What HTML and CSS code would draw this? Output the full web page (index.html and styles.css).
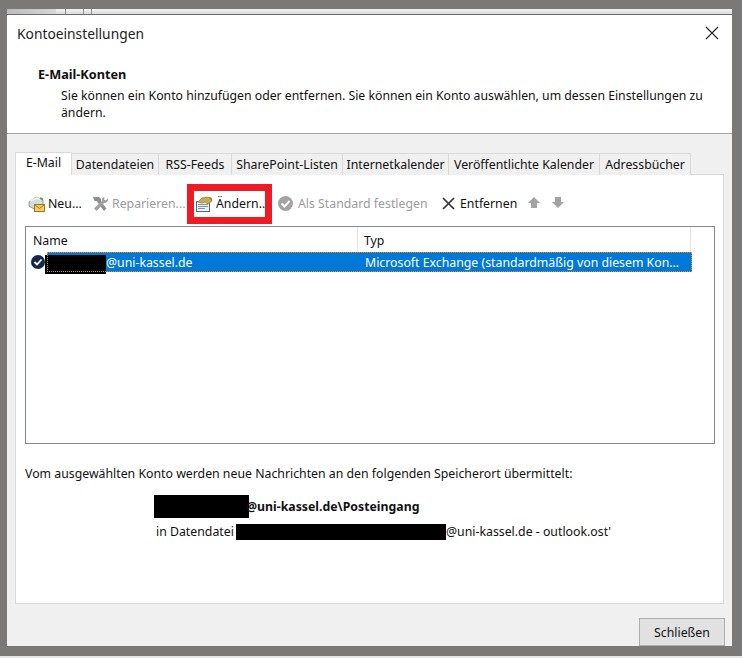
FILE: index.html
```html
<!DOCTYPE html>
<html lang="de">
<head>
    <meta charset="UTF-8">
    <meta name="viewport" content="width=device-width, initial-scale=1.0">
    <title>Kontoeinstellungen</title>
    <link rel="stylesheet" href="styles.css">
</head>
<body>
    <div class="dialog">
        <div class="strip">
            <span class="strip-dark"></span>
            <span class="strip-tick tick-a"></span>
            <span class="strip-tick tick-b"></span>
            <span class="strip-tick tick-c"></span>
        </div>

        <div class="head">
            <div class="title-row">
                <span class="title">Kontoeinstellungen</span>
                <svg class="close" width="14" height="14" viewBox="0 0 14 14"><path d="M1 1l12 12M13 1L1 13" stroke="#222" stroke-width="1.1" fill="none"/></svg>
            </div>
            <h1 class="head-title">E-Mail-Konten</h1>
            <p class="head-text">Sie können ein Konto hinzufügen oder entfernen. Sie können ein Konto auswählen, um dessen Einstellungen zu<br>ändern.</p>
        </div>

        <div class="body">
            <div class="tabs">
                <span class="tab active">E-Mail</span>
                <span class="tab t-daten">Datendateien</span>
                <span class="tab t-rss">RSS-Feeds</span>
                <span class="tab t-share">SharePoint-Listen</span>
                <span class="tab t-inet">Internetkalender</span>
                <span class="tab t-veroef">Veröffentlichte Kalender</span>
                <span class="tab t-adress">Adressbücher</span>
            </div>

            <div class="panel">
                <div class="toolbar">
                    <span class="tool tool-new">
                        <svg width="18" height="18" viewBox="0 0 18 18">
                            <path d="M1 7l7-5 7 3v6l-7 4-7-4z" fill="#d5dade" stroke="#8d979e" stroke-width="1"/>
                            <path d="M2.500 6l6-3 5 2" fill="none" stroke="#f4f6f7" stroke-width="1.500"/>
                            <path d="M12 3l3 1.500" stroke="#4fb848" stroke-width="2"/>
                            <rect x="6.500" y="9.500" width="10" height="7" fill="#f3cc62" stroke="#9c7a22"/>
                            <path d="M6.500 9.500l5 4 5-4" fill="none" stroke="#9c7a22"/>
                        </svg>
                        <span>Neu...</span>
                    </span>
                    <span class="tool tool-fix off">
                        <svg width="17" height="16" viewBox="0 0 17 16">
                            <path d="M1 1h6l2 2v2L7 6.500 5.500 5 2.500 5z" fill="#8e8e8e"/>
                            <path d="M5 5.500L7.500 3.500 14.500 12.500 12 15z" fill="#8e8e8e"/>
                            <path d="M16 2.500l-2.500 2-1.500-1 .5-2.500C10.500 1 9.500 3 10 5L2 12.500 4.500 15 12 7c2 .5 4.500-1.500 4-4.500z" fill="#a0a0a0"/>
                        </svg>
                        <span>Reparieren...</span>
                    </span>
                    <span class="tool tool-edit">
                        <svg width="18" height="16" viewBox="0 0 18 16">
                            <rect x="1.500" y="5.500" width="13" height="10" fill="#eef2f6" stroke="#4a6a8c"/>
                            <path d="M3 8.500h10M3 10.500h10M3 12.500h7" stroke="#7d93aa"/>
                            <path d="M3 6l4-4 4-1 5 1 1 3-4 3-3-2-3 1z" fill="#cdaa4c" stroke="#8c7530" stroke-width=".7"/>
                            <path d="M13 1l4 1v3z" fill="#5f9e4c"/>
                        </svg>
                        <span>Ändern...</span>
                    </span>
                    <span class="tool tool-std off">
                        <svg width="15" height="15" viewBox="0 0 15 15">
                            <circle cx="7.500" cy="7.500" r="7.500" fill="#a3a3a3"/>
                            <path d="M3.500 7.500l3 3 5-5.500" fill="none" stroke="#fff" stroke-width="2"/>
                        </svg>
                        <span>Als Standard festlegen</span>
                    </span>
                    <span class="tool tool-del">
                        <svg width="13" height="13" viewBox="0 0 13 13"><path d="M1 1l11 11M12 1L1 12" stroke="#333" stroke-width="1.700" fill="none"/></svg>
                        <span>Entfernen</span>
                    </span>
                    <svg class="arrow arrow-up" width="12" height="11" viewBox="0 0 12 11"><path d="M6 0l6 6H9v5H3V6H0z" fill="#a3a3a3"/></svg>
                    <svg class="arrow arrow-down" width="12" height="11" viewBox="0 0 12 11"><path d="M3 0h6v5h3l-6 6-6-6h3z" fill="#a3a3a3"/></svg>
                </div>

                <div class="list">
                    <div class="list-head">
                        <span class="col-name">Name</span>
                        <span class="col-type">Typ</span>
                    </div>
                    <div class="list-row">
                        <svg class="row-icon" width="14" height="14" viewBox="0 0 14 14">
                            <circle cx="7" cy="7" r="7" fill="#12294d"/>
                            <path d="M3.500 7l2.500 2.500 4.500-5" fill="none" stroke="#fff" stroke-width="1.800"/>
                        </svg>
                        <span class="row-selected">
                            <span class="row-name"><span class="redact redact-row"></span>@uni-kassel.de</span>
                            <span class="row-type">Microsoft Exchange (standardmäßig von diesem Kon...</span>
                        </span>
                    </div>
                </div>

                <p class="info">Vom ausgewählten Konto werden neue Nachrichten an den folgenden Speicherort übermittelt:</p>
                <p class="target"><span class="redact redact-target"></span><span class="target-text">@uni-kassel.de\Posteingang</span></p>
                <p class="file">in Datendatei <span class="redact redact-file"></span>@uni-kassel.de - outlook.ost'</p>
            </div>

            <div class="footer">
                <button class="close-btn">Schließen</button>
            </div>
        </div>
    </div>
    <div class="under"></div>
</body>
</html>
```

FILE: styles.css
```css
html, body {
    margin: 0;
    height: 658px;
    overflow: hidden;
}
body {
    background: #7a7977;
    font-family: "Noto Sans", "Open Sans", sans-serif;
    font-size: 12.3px;
    color: #111;
    display: flex;
    flex-direction: column;
}
p, h1 {
    margin: 0;
}
.dialog {
    margin: 9px 10px 0 7px;
    height: 637px;
    display: flex;
    flex-direction: column;
    background: #f0f0f0;
}
.under {
    margin-top: 10px;
    height: 2px;
    background: #e6e6e6;
}

/* strip of the window behind */
.strip {
    height: 5px;
    border-bottom: 1px solid #6d6d6d;
    background: linear-gradient(#f2f2f2, #dcdcdc);
    display: flex;
}
.strip-dark {
    width: 49px;
    background: linear-gradient(90deg, #bdbdbd, #d6d6d6);
}
.strip-tick {
    width: 1px;
    background: #8f8f8f;
}
.tick-a { margin-left: 9px; }
.tick-b { margin-left: 17px; }
.tick-c { margin-left: 7px; }

/* header */
.head {
    height: 119px;
    box-sizing: border-box;
    background: #fff;
    border-bottom: 1px solid #a5a5a5;
    padding: 8px 0 0 10px;
}
.title-row {
    display: flex;
    justify-content: space-between;
    align-items: center;
    height: 20px;
    padding-right: 13px;
}
.title {
    font-size: 13.8px;
    color: #222;
}
.head-title {
    font-size: 12.7px;
    font-weight: 700;
    margin: 23px 0 0 21px;
    line-height: 17px;
    color: #111;
}
.head-text {
    margin: 4px 0 0 44px;
    line-height: 17px;
    font-size: 12.25px;
}

/* tabs */
.body {
    flex: 1;
    padding: 18px 8px 0 8px;
    display: flex;
    flex-direction: column;
}
.tabs {
    display: flex;
    height: 23px;
    align-items: flex-end;
    position: relative;
    z-index: 1;
}
.tab {
    box-sizing: border-box;
    height: 22px;
    line-height: 21px;
    text-align: center;
    border: 1px solid #d9d9d9;
    border-left: 0;
    border-bottom: 0;
    background: #f0f0f0;
    white-space: nowrap;
}
.tab.active {
    height: 23px;
    width: 57px;
    background: #fff;
    border-left: 1px solid #d9d9d9;
    line-height: 19px;
}
.t-daten { width: 87px; }
.t-rss { width: 73px; }
.t-share { width: 111px; }
.t-inet { width: 106px; }
.t-veroef { width: 151px; }
.t-adress { width: 91px; }

/* panel */
.panel {
    height: 430px;
    box-sizing: border-box;
    background: #fff;
    border: 1px solid #d9d9d9;
    padding: 8px 7px 0 9px;
    margin-top: -1px;
}
.toolbar {
    display: flex;
    align-items: center;
    height: 41px;
    color: #111;
}
.tool {
    display: flex;
    align-items: center;
    gap: 2px;
    white-space: nowrap;
    box-sizing: border-box;
}
.tool svg {
    flex: none;
}
.tool.off {
    color: #9c9c9c;
}
.tool-new { margin-left: 3px; width: 53px; }
.tool-fix { margin-left: 11px; gap: 3px; width: 93px; }
.tool-edit {
    margin-left: 2px;
    width: 85px;
    height: 40px;
    border: 7px solid #ed1c24;
    padding-left: 1px;
    gap: 3px;
    overflow: hidden;
}
.tool-std { margin-left: 6px; gap: 5px; width: 151px; }
.tool-del { margin-left: 13px; gap: 5px; width: 73px; }
.arrow { margin-top: -2px; }
.arrow-up { margin-left: 13px; }
.arrow-down { margin-left: 12px; }

/* account list */
.list {
    box-sizing: border-box;
    height: 218px;
    margin-top: 2px;
    border: 1px solid #828790;
    width: 690px;
}
.list-head {
    display: flex;
    height: 25px;
    line-height: 27px;
}
.col-name {
    width: 324px;
    padding-left: 7px;
    border-right: 1px solid #e5e5e5;
}
.col-type {
    width: 326px;
    padding-left: 6px;
    border-right: 1px solid #e5e5e5;
}
.list-row {
    display: flex;
    align-items: center;
    height: 20px;
    padding-left: 5px;
}
.row-icon {
    flex: none;
    position: relative;
    z-index: 1;
}
.row-selected {
    display: flex;
    box-sizing: border-box;
    width: 645px;
    height: 20px;
    margin-left: 2px;
    background: #0078d7;
    color: #fff;
    outline: 1px dotted #e08a2a;
    outline-offset: -1px;
    line-height: 21px;
    white-space: nowrap;
}
.row-name {
    width: 318px;
    display: flex;
    align-items: center;
}
.redact {
    display: inline-block;
    background: #000;
}
.redact-row {
    width: 61px;
    height: 19px;
    margin: 4px 0 0 -2px;
}

/* below the list */
.info {
    margin-top: 21px;
    line-height: 17px;
}
.target {
    display: flex;
    align-items: center;
    margin: 12px 0 0 129px;
    height: 24px;
    font-weight: 700;
    color: #111;
}
.redact-target {
    width: 95px;
    height: 23px;
}
.target-text {
    margin-left: -3px;
}
.file {
    margin: 5px 0 0 131px;
    line-height: 18px;
    display: flex;
    align-items: center;
    white-space: pre;
}
.redact-file {
    width: 210px;
    height: 16px;
    margin-left: -1px;
}

/* footer */
.footer {
    flex: 1;
    display: flex;
    justify-content: flex-end;
    align-items: flex-end;
    margin-right: -1px;
}
.close-btn {
    width: 86px;
    height: 28px;
    padding: 0;
    background: #e1e1e1;
    border: 1px solid #adadad;
    font: inherit;
    color: #111;
}
```
